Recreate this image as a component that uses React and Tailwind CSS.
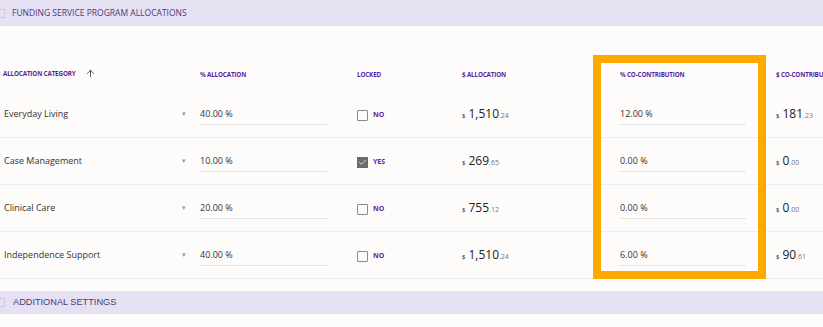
import { ArrowUp, Check } from "lucide-react";

const rows = [
  { name: "Everyday Living", pct: "40.00 %", locked: false, amt: "1,510", cents: "24", co: "12.00 %", coAmt: "181", coCents: "23" },
  { name: "Case Management", pct: "10.00 %", locked: true, amt: "269", cents: "65", co: "0.00 %", coAmt: "0", coCents: "00" },
  { name: "Clinical Care", pct: "20.00 %", locked: false, amt: "755", cents: "12", co: "0.00 %", coAmt: "0", coCents: "00" },
  { name: "Independence Support", pct: "40.00 %", locked: false, amt: "1,510", cents: "24", co: "6.00 %", coAmt: "90", coCents: "61" },
];

function Money({ whole, cents }) {
  return (
    <span className="flex items-baseline text-[#222]">
      <span className="text-[6px] mr-[3px]">$</span>
      <span className="text-[12px] font-medium">{whole}</span>
      <span className="text-[7px] text-[#777]">.{cents}</span>
    </span>
  );
}

// faint collapse toggle, mostly clipped at the left edge
function Toggle() {
  return <span className="w-[9px] h-[9px] -ml-[4px] mr-[7px] border border-[#cfc6e6] rounded-[1px] shrink-0" />;
}

export default function App() {
  return (
    <div className="relative w-[823px] h-[327px] overflow-hidden bg-[#fdfcfa] font-['Open_Sans',sans-serif]">
      {/* ── Section header ── */}
      <div className="flex items-center h-[26px] bg-[#e6e0f3] text-[8.5px] text-[#4b3a7a]">
        <Toggle />
        FUNDING SERVICE PROGRAM ALLOCATIONS
      </div>

      {/* ── Column headers ── */}
      <div className="flex items-end h-[54px] pb-[1px] text-[6.3px] font-bold text-[#5a1ea0] tracking-tight whitespace-nowrap">
        <div className="w-[200px] shrink-0 pl-[3px] flex items-center gap-[9px]">
          ALLOCATION CATEGORY
          <ArrowUp size={11} strokeWidth={1.6} className="text-[#222]" />
        </div>
        <div className="w-[157px] shrink-0">% ALLOCATION</div>
        <div className="w-[105px] shrink-0">LOCKED</div>
        <div className="w-[158px] shrink-0">$ ALLOCATION</div>
        <div className="w-[156px] shrink-0">% CO-CONTRIBUTION</div>
        <div className="shrink-0">$ CO-CONTRIBUTION</div>
      </div>

      {/* ── Rows ── */}
      <div className="mt-[11px]">
        {rows.map((r) => (
          <div key={r.name} className="flex items-center h-[47px] border-b border-[#ececec]">
            <div className="w-[200px] shrink-0 pl-[4px] flex items-center text-[9px] text-[#333]">
              <span className="w-[178px]">{r.name}</span>
              <span className="text-[7px] text-[#999]">▾</span>
            </div>
            <div className="w-[157px] shrink-0">
              <div className="w-[127px] border-b border-[#e4e4e4] pt-[4px] pb-[3px] text-[9px] text-[#333]">{r.pct}</div>
            </div>
            <div className="w-[105px] shrink-0 flex items-center gap-[5px] pt-[2px]">
              {r.locked ? (
                <span className="w-[11px] h-[11px] bg-[#6b6b6b] flex items-center justify-center">
                  <Check size={9} strokeWidth={2} className="text-white" />
                </span>
              ) : (
                <span className="w-[11px] h-[11px] border border-[#8a8a8a] rounded-[1px]" />
              )}
              <span className="text-[7px] font-bold text-[#6a1b9a]">{r.locked ? "YES" : "NO"}</span>
            </div>
            <div className="w-[158px] shrink-0">
              <Money whole={r.amt} cents={r.cents} />
            </div>
            <div className="w-[156px] shrink-0">
              <div className="w-[126px] border-b border-[#e4e4e4] pt-[4px] pb-[3px] text-[9px] text-[#333]">{r.co}</div>
            </div>
            <div className="shrink-0">
              <Money whole={r.coAmt} cents={r.coCents} />
            </div>
          </div>
        ))}
      </div>

      {/* ── Additional settings header ── */}
      <div className="mt-[12px] flex items-center h-[23px] bg-[#e6e0f3] text-[9.2px] text-[#4b3a7a] font-['Liberation_Sans',sans-serif]">
        <Toggle />
        <span className="ml-[1px]">ADDITIONAL SETTINGS</span>
      </div>

      {/* ── Highlight annotation ── */}
      <div className="absolute left-[593px] top-[55px] w-[173px] h-[224px] border-[8px] border-[#ffa800] pointer-events-none" />
    </div>
  );
}
